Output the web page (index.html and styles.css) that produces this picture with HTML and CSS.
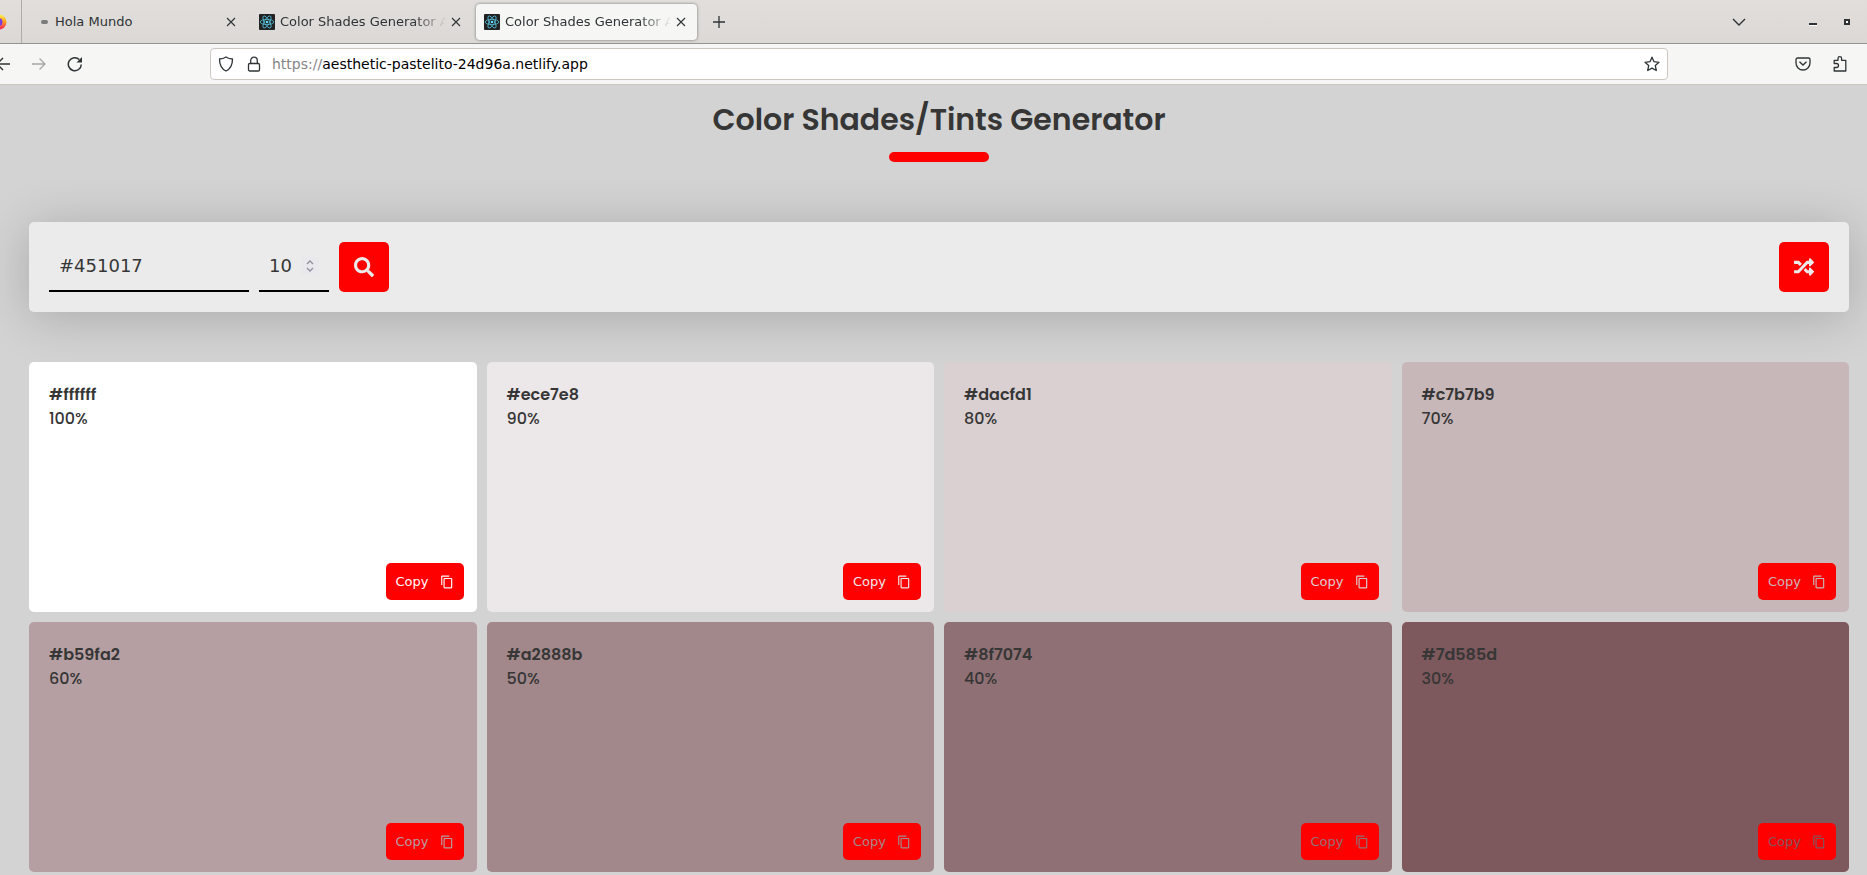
FILE: index.html
```html
<!DOCTYPE html>
<html lang="en">
<head>
<meta charset="utf-8">
<title>Color Shades Generator App</title>
<link rel="stylesheet" href="styles.css">
</head>
<body>
<svg class="defs" width="0" height="0" aria-hidden="true">
  <symbol id="close" viewBox="0 0 10 10"><path d="M1 1l8 8M9 1L1 9" fill="none" stroke="currentColor" stroke-width="1.1"/></symbol>
  <symbol id="react" viewBox="0 0 16 16">
    <rect width="16" height="16" rx="1" fill="#222"/>
    <g fill="none" stroke="#53c1de" stroke-width=".8">
      <ellipse cx="8" cy="8" rx="6.8" ry="2.6"/>
      <ellipse cx="8" cy="8" rx="6.8" ry="2.6" transform="rotate(60 8 8)"/>
      <ellipse cx="8" cy="8" rx="6.8" ry="2.6" transform="rotate(120 8 8)"/>
    </g>
    <circle cx="8" cy="8" r="1.3" fill="#61dafb"/>
  </symbol>
  <symbol id="copy" viewBox="0 0 24 24"><path fill="currentColor" d="M16 1H4c-1.100 0-2 .9-2 2v14h2V3h12V1zm3 4H8c-1.100 0-2 .9-2 2v14c0 1.100.9 2 2 2h11c1.100 0 2-.9 2-2V7c0-1.100-.9-2-2-2zm0 16H8V7h11v14z"/></symbol>
</svg>

<header class="browser">
  <div class="tabs">
    <div class="launcher">
      <svg width="7" height="16" viewBox="9 0 7 16"><defs><linearGradient id="fox" x1="0" y1="0" x2="0" y2="1"><stop offset="0" stop-color="#fff44f"/><stop offset=".5" stop-color="#ff9a1f"/><stop offset="1" stop-color="#ff1a66"/></linearGradient></defs><circle cx="8" cy="8" r="7.500" fill="url(#fox)"/><circle cx="7.500" cy="8" r="4" fill="#7a3be0"/></svg>
    </div>
    <div class="tab">
      <span class="dash"></span>
      <span class="tab-title">Hola Mundo</span>
      <button class="icon-btn" aria-label="Close tab"><svg width="10" height="10"><use href="#close"/></svg></button>
    </div>
    <div class="tab">
      <svg class="favicon" width="16" height="16"><use href="#react"/></svg>
      <span class="tab-title fade">Color Shades Generator App</span>
      <button class="icon-btn" aria-label="Close tab"><svg width="10" height="10"><use href="#close"/></svg></button>
    </div>
    <div class="tab active">
      <svg class="favicon" width="16" height="16"><use href="#react"/></svg>
      <span class="tab-title fade">Color Shades Generator App</span>
      <button class="icon-btn" aria-label="Close tab"><svg width="10" height="10"><use href="#close"/></svg></button>
    </div>
    <button class="icon-btn new-tab" aria-label="New tab"><svg width="12" height="12" viewBox="0 0 12 12"><path d="M6 0v12M0 6h12" stroke="currentColor" stroke-width="1.300"/></svg></button>
    <div class="window-controls">
      <button class="icon-btn" aria-label="List all tabs"><svg width="14" height="8" viewBox="0 0 14 8"><path d="M1 1l6 6 6-6" fill="none" stroke="currentColor" stroke-width="1.400"/></svg></button>
      <button class="icon-btn minimize" aria-label="Minimize"><svg width="8" height="8" viewBox="0 0 8 8"><path d="M0 5h8v2H0z" fill="#2e3436"/><path d="M0 7h8v1H0z" fill="#fff"/></svg></button>
      <button class="icon-btn" aria-label="Restore"><svg width="6" height="6" viewBox="0 0 6 6"><path d="M1 1h4v4H1z" fill="#fff" stroke="#2e3436" stroke-width="2"/></svg></button>
    </div>
  </div>
  <div class="toolbar">
    <button class="icon-btn back" aria-label="Back"><svg width="10" height="14" viewBox="6 0 10 14"><path d="M16 7H3M9 1L3 7l6 6" fill="none" stroke="currentColor" stroke-width="1.400"/></svg></button>
    <button class="icon-btn forward" aria-label="Forward"><svg width="14" height="14" viewBox="0 0 14 14"><path d="M0 7h13M7.500 1.500L13 7l-5.500 5.500" fill="none" stroke="currentColor" stroke-width="1.300"/></svg></button>
    <button class="icon-btn" aria-label="Reload"><svg width="16" height="16" viewBox="0 0 16 16"><path d="M14.300 8.500A6.500 6.500 0 1 1 12.300 3.500" fill="none" stroke="currentColor" stroke-width="1.500"/><path d="M15 1v5.500H9.500z" fill="currentColor"/></svg></button>
    <div class="address">
      <svg width="16" height="16" viewBox="0 0 16 16"><path d="M8 1C6 2.300 4 3 1.500 3c0 5.500 1 9.500 6.500 12 5.500-2.500 6.500-6.500 6.500-12C12 3 10 2.300 8 1z" fill="none" stroke="currentColor" stroke-width="1.300" stroke-linejoin="round"/></svg>
      <svg class="lock" width="14" height="16" viewBox="0 0 14 16"><rect x="1.500" y="7.500" width="11" height="7.500" rx="1.200" fill="none" stroke="currentColor" stroke-width="1.300"/><path d="M3.700 7.500V4.500a3.300 3.300 0 0 1 6.600 0v3" fill="none" stroke="currentColor" stroke-width="1.300"/></svg>
      <span class="url"><span class="scheme">https://</span>aesthetic-pastelito-24d96a.netlify.app</span>
      <button class="icon-btn" aria-label="Bookmark this page"><svg width="16" height="16" viewBox="0 0 16 16"><path d="M8 1.200l2 4.500 5 .6-3.700 3.300 1 4.900L8 12.100l-4.300 2.400 1-4.900L1 6.300l5-.6z" fill="none" stroke="currentColor" stroke-width="1.300" stroke-linejoin="round"/></svg></button>
    </div>
    <div class="extras">
      <button class="icon-btn" aria-label="Save to Pocket"><svg width="16" height="14" viewBox="0 0 16 14"><path d="M2.500 1h11a1.500 1.500 0 0 1 1.500 1.500V6a7 7 0 0 1-14 0V2.500A1.500 1.500 0 0 1 2.500 1z" fill="none" stroke="currentColor" stroke-width="1.300"/><path d="M4.500 4.700L8 8l3.500-3.300" fill="none" stroke="currentColor" stroke-width="1.300"/></svg></button>
      <button class="icon-btn" aria-label="Extensions"><svg width="14" height="16" viewBox="0 0 14 16"><path d="M1.200 7.500V4.300H5V2.500a1.800 1.800 0 0 1 3.600 0v1.800h4.200V15H1.200v-3.500h2.300a2 2 0 0 0 0-4z" fill="none" stroke="currentColor" stroke-width="1.300" stroke-linejoin="round"/></svg></button>
    </div>
  </div>
</header>

<main class="page">
  <h1 class="title">Color Shades/Tints Generator</h1>
  <div class="underline"></div>
  <form class="panel">
    <input class="field hex" type="text" value="#451017" aria-label="Color">
    <div class="amount">
      <input class="field number" type="text" inputmode="numeric" value="10" aria-label="Step">
      <span class="spinner"><svg width="8" height="12" viewBox="0 0 8 12"><path d="M1 4l3-3 3 3M1 8l3 3 3-3" fill="none" stroke="currentColor" stroke-width="1.300"/></svg></span>
    </div>
    <button class="action" type="button" aria-label="Search"><svg width="20" height="20" viewBox="0 0 512 512"><path fill="currentColor" d="M505 442.700L405.300 343c-4.500-4.500-10.600-7-17-7H372c27.600-35.300 44-79.700 44-128C416 93.100 322.900 0 208 0S0 93.100 0 208s93.100 208 208 208c48.300 0 92.700-16.400 128-44v16.300c0 6.400 2.500 12.500 7 17l99.700 99.700c9.400 9.400 24.600 9.400 33.900 0l28.300-28.300c9.400-9.400 9.400-24.600.1-34zM208 336c-70.700 0-128-57.200-128-128 0-70.700 57.200-128 128-128 70.700 0 128 57.200 128 128 0 70.700-57.200 128-128 128z"/></svg></button>
    <button class="action shuffle" type="button" aria-label="Random color"><svg width="20" height="20" viewBox="0 0 512 512"><path fill="currentColor" d="M504.971 359.029c9.373 9.373 9.373 24.569 0 33.941l-80 79.984c-15.010 15.010-40.971 4.490-40.971-16.971V416h-58.785a12.004 12.004 0 0 1-8.773-3.812l-70.556-75.596 53.333-57.143L352 336h32v-39.981c0-21.438 25.943-31.998 40.971-16.971l80 79.981zM12 176h84l52.781 56.551 53.333-57.143-70.556-75.596A11.999 11.999 0 0 0 122.785 96H12c-6.627 0-12 5.373-12 12v56c0 6.627 5.373 12 12 12zm372 0v39.984c0 21.460 25.961 31.980 40.971 16.971l80-79.984c9.373-9.373 9.373-24.569 0-33.941l-80-79.981C409.943 24.021 384 34.582 384 56.019V96h-58.785a12.004 12.004 0 0 0-8.773 3.812L96 336H12c-6.627 0-12 5.373-12 12v56c0 6.627 5.373 12 12 12h110.785c3.326 0 6.503-1.381 8.773-3.812L352 176h32z"/></svg></button>
  </form>

  <section class="shades">
    <article class="shade s100"><h2>#ffffff</h2><p>100%</p><button class="copy">Copy <svg width="14" height="14"><use href="#copy"/></svg></button></article>
    <article class="shade s90"><h2>#ece7e8</h2><p>90%</p><button class="copy">Copy <svg width="14" height="14"><use href="#copy"/></svg></button></article>
    <article class="shade s80"><h2>#dacfd1</h2><p>80%</p><button class="copy">Copy <svg width="14" height="14"><use href="#copy"/></svg></button></article>
    <article class="shade s70"><h2>#c7b7b9</h2><p>70%</p><button class="copy">Copy <svg width="14" height="14"><use href="#copy"/></svg></button></article>
    <article class="shade s60"><h2>#b59fa2</h2><p>60%</p><button class="copy">Copy <svg width="14" height="14"><use href="#copy"/></svg></button></article>
    <article class="shade s50"><h2>#a2888b</h2><p>50%</p><button class="copy">Copy <svg width="14" height="14"><use href="#copy"/></svg></button></article>
    <article class="shade s40"><h2>#8f7074</h2><p>40%</p><button class="copy">Copy <svg width="14" height="14"><use href="#copy"/></svg></button></article>
    <article class="shade s30"><h2>#7d585d</h2><p>30%</p><button class="copy">Copy <svg width="14" height="14"><use href="#copy"/></svg></button></article>
  </section>
</main>
</body>
</html>
```
FILE: styles.css
```css
* { box-sizing: border-box; margin: 0; padding: 0; }

body {
  background: #d3d3d3;
  color: #363636;
  font-family: Poppins, Inter, sans-serif;
}

svg { display: block; flex: none; }
button, input { border: 0; background: none; color: inherit; font-family: "DejaVu Sans", sans-serif; }
.defs { position: absolute; }

/* Browser window */
.browser { font: 13px "DejaVu Sans", sans-serif; color: #2e3436; }
.icon-btn { display: flex; flex: none; }

.tabs {
  display: flex;
  align-items: center;
  height: 44px;
  background: linear-gradient(#e1dedb, #dcd8d5);
  border-bottom: 1px solid #96938f;
}
.launcher {
  display: flex;
  align-items: center;
  width: 22px;
  height: 43px;
  border-right: 1px solid #b0aca8;
}
.tab {
  display: flex;
  align-items: center;
  gap: 5px;
  width: 221px;
  height: 36px;
  margin-right: 4px;
  padding: 0 11px 0 8px;
  border-radius: 4px;
}
.launcher + .tab { gap: 7px; padding-left: 19px; width: 225px; }
.tab.active { background: #f6f6f4; box-shadow: 0 0 3px rgba(0, 0, 0, .5); }
.dash { width: 7px; height: 4px; border-radius: 2px; background: #7a7c7c; }
.tab-title { flex: 1; overflow: hidden; white-space: nowrap; line-height: 20px; }
.fade { mask-image: linear-gradient(to left, transparent, #000 32px); }
.new-tab { margin-left: 12px; }
.window-controls { display: flex; align-items: center; gap: 63px; margin-left: auto; padding-right: 17px; }
.minimize { margin-right: -36px; }

.toolbar {
  display: flex;
  align-items: center;
  height: 41px;
  background: #f6f6f4;
  border-bottom: 1px solid #cdc7c2;
}
.forward { margin: 0 21px 0 22px; color: #a4a7a7; }
.address {
  display: flex;
  align-items: center;
  flex: 1;
  height: 32px;
  margin-left: 127px;
  padding: 0 7px;
  background: #fff;
  border: 1px solid #cdc7c2;
  border-radius: 4px;
}
.lock { margin: 0 11px 0 13px; }
.url { flex: 1; color: #000; font-size: 14px; line-height: 20px; }
.scheme { color: #858585; }
.extras { display: flex; align-items: center; gap: 22px; margin: 0 20px 0 127px; }

/* Generator */
.page { padding: 11px 18px 20px 29px; }
.title { text-align: center; font-size: 30px; font-weight: 600; line-height: 48px; }
.underline { width: 100px; height: 10px; margin: 8px auto 60px; border-radius: 5px; background: #f00; }

.panel {
  display: flex;
  gap: 10px;
  padding: 20px;
  background: #ebebeb;
  border-radius: 5px;
  box-shadow: 0 5px 50px rgba(0, 0, 0, .2);
}
.field { height: 50px; padding: 0 10px 2px; border-bottom: 2px solid #000; font-size: 18px; outline: 0; }
.hex { width: 200px; }
.amount { position: relative; width: 70px; }
.number { width: 100%; }
.spinner {
  position: absolute;
  top: 15px;
  right: 10px;
  display: grid;
  place-items: center;
  width: 18px;
  height: 18px;
  background: #e9e9ed;
  color: #8f8f9d;
}
.action {
  display: grid;
  place-items: center;
  width: 50px;
  height: 50px;
  border-radius: 5px;
  background: #f00;
  color: #ebebeb;
}
.shuffle { margin-left: auto; }

.shades {
  position: relative;
  display: grid;
  grid-template-columns: repeat(4, 1fr);
  gap: 10px;
  margin-top: 50px;
}
.shade {
  display: flex;
  flex-direction: column;
  min-height: 250px;
  padding: 21px 13px 12px 20px;
  border-radius: 5px;
}
.shade h2 { font-size: 16px; font-weight: 600; line-height: 24px; }
.shade p { font-size: 16px; font-weight: 500; line-height: 24px; }
.copy {
  display: flex;
  align-items: center;
  align-self: flex-end;
  gap: 11px;
  height: 37px;
  margin-top: auto;
  padding: 0 10px;
  border-radius: 5px;
  background: #f00;
  font-size: 13px;
}
.s100 { background: #fff; } .s100 .copy { color: #fff; }
.s90 { background: #ece7e8; } .s90 .copy { color: #ece7e8; }
.s80 { background: #dacfd1; } .s80 .copy { color: #dacfd1; }
.s70 { background: #c7b7b9; } .s70 .copy { color: #c7b7b9; }
.s60 { background: #b59fa2; } .s60 .copy { color: #b59fa2; }
.s50 { background: #a2888b; } .s50 .copy { color: #a2888b; }
.s40 { background: #8f7074; } .s40 .copy { color: #8f7074; }
.s30 { background: #7d585d; } .s30 .copy { color: #7d585d; }
```
